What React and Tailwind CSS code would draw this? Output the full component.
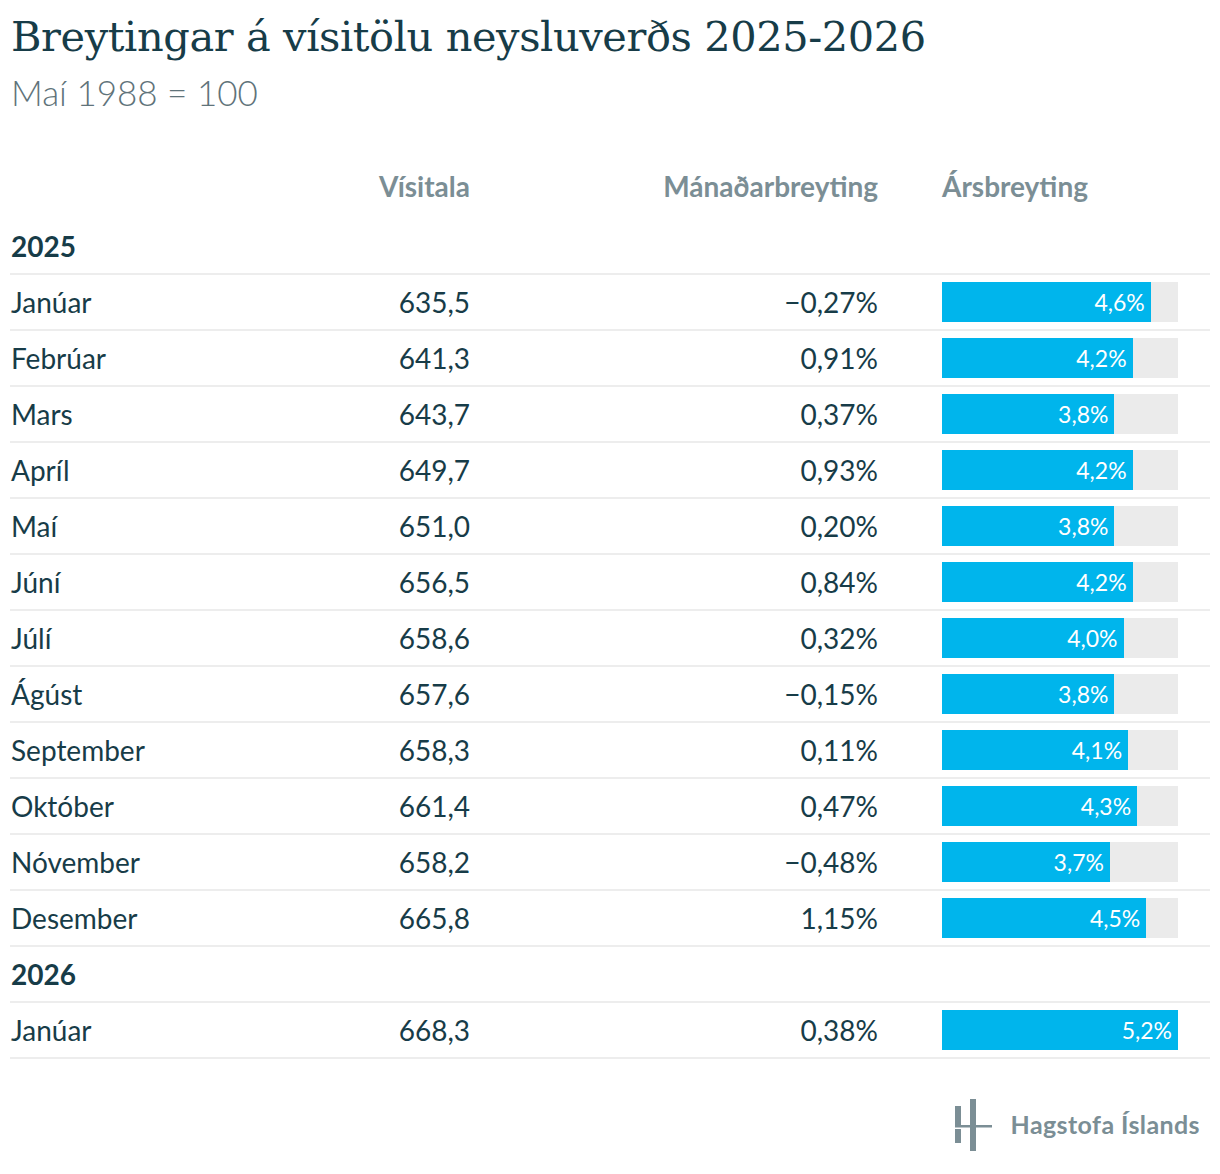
const rows2025 = [
  ["Janúar", "635,5", "−0,27%", 4.6],
  ["Febrúar", "641,3", "0,91%", 4.2],
  ["Mars", "643,7", "0,37%", 3.8],
  ["Apríl", "649,7", "0,93%", 4.2],
  ["Maí", "651,0", "0,20%", 3.8],
  ["Júní", "656,5", "0,84%", 4.2],
  ["Júlí", "658,6", "0,32%", 4.0],
  ["Ágúst", "657,6", "−0,15%", 3.8],
  ["September", "658,3", "0,11%", 4.1],
  ["Október", "661,4", "0,47%", 4.3],
  ["Nóvember", "658,2", "−0,48%", 3.7],
  ["Desember", "665,8", "1,15%", 4.5],
];

const rows2026 = [["Janúar", "668,3", "0,38%", 5.2]];

const MAX = 5.2;

const Bar = ({ value }) => (
  <div className="w-[236px] h-[40px] bg-[#ebebeb]">
    <div
      className="h-full bg-[#00b5ec] flex items-center justify-end pr-[6px] text-white text-[23px]"
      style={{ width: `${(value / MAX) * 100}%` }}
    >
      {value.toFixed(1).replace(".", ",")}%
    </div>
  </div>
);

const Row = ({ r }) => (
  <div className="grid grid-cols-[200px_260px_408px_1fr] h-[56px] items-center border-b-2 border-[#ededed] text-[28px] text-[#173c48]">
    <div className="pl-px">{r[0]}</div>
    <div className="text-right">{r[1]}</div>
    <div className="text-right">{r[2]}</div>
    <div className="pl-[64px]">
      <Bar value={r[3]} />
    </div>
  </div>
);

const YearRow = ({ year }) => (
  <div className="h-[56px] flex items-center border-b-2 border-[#ededed] text-[28px] font-bold text-[#173c48] pl-px">
    {year}
  </div>
);

const Logo = () => (
  <div className="flex items-center gap-[16px] text-[#7b8e95]">
    <svg width="40" height="52" viewBox="0 0 40 52" fill="#7b8e95">
      <rect x="0" y="7" width="6" height="20" />
      <rect x="0" y="30" width="6" height="14" />
      <rect x="15" y="0" width="6" height="52" />
      <rect x="0" y="26" width="37" height="2.5" />
    </svg>
    <span className="text-[25px] font-bold tracking-[0.4px]">Hagstofa Íslands</span>
  </div>
);

export default function App() {
  return (
    <div className="w-[1220px] h-[1174px] bg-white font-['Lato',sans-serif] px-[10px] pt-[12px]">
      <h1 className="font-['DejaVu_Serif',serif] text-[41.5px] leading-[50px] text-[#173c48] pl-px tracking-[-0.4px]">
        Breytingar á vísitölu neysluverðs 2025-2026
      </h1>
      <div className="text-[35px] font-light text-[#5f737a] leading-[40px] mt-[10px] pl-px">
        Maí 1988 = 100
      </div>

      <div className="mt-[53px] grid grid-cols-[200px_260px_408px_1fr] h-[40px] items-center text-[28px] font-bold text-[#7b8e95]">
        <div />
        <div className="text-right">Vísitala</div>
        <div className="text-right">Mánaðarbreyting</div>
        <div className="pl-[64px]">Ársbreyting</div>
      </div>

      <div className="mt-[14px]">
        <YearRow year="2025" />
        {rows2025.map((r) => (
          <Row key={r[0]} r={r} />
        ))}
        <YearRow year="2026" />
        {rows2026.map((r) => (
          <Row key={r[0] + "26"} r={r} />
        ))}
      </div>

      <div className="flex justify-end mt-[40px] pr-[10px]">
        <Logo />
      </div>
    </div>
  );
}
